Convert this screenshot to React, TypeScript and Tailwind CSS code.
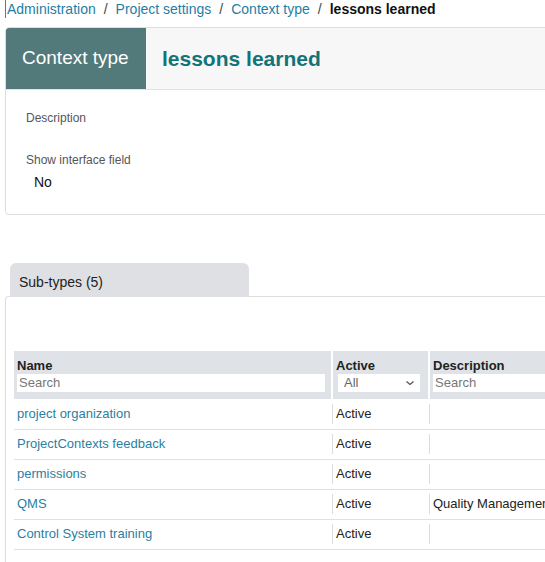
import React from "react";

type SubType = {
    name: string;
    status: string;
    description: string;
};

const subTypes: SubType[] = [
    { name: "project organization", status: "Active", description: "" },
    { name: "ProjectContexts feedback", status: "Active", description: "" },
    { name: "permissions", status: "Active", description: "" },
    { name: "QMS", status: "Active", description: "Quality Management System" },
    { name: "Control System training", status: "Active", description: "" },
];

const Breadcrumb = () => (
    <div className="flex h-[18px] items-center pl-[5px] text-[14px] leading-[18px]">
        <span className="border-l border-[#3b82c4] pl-px text-[#1f7ea3]">Administration</span>
        <span className="px-2 text-[#444]">/</span>
        <span className="text-[#1f7ea3]">Project settings</span>
        <span className="px-2 text-[#444]">/</span>
        <span className="text-[#1f7ea3]">Context type</span>
        <span className="px-2 text-[#444]">/</span>
        <span className="font-bold text-[#111]">lessons learned</span>
    </div>
);

const ContextCard = () => (
    <div className="ml-[5px] mt-[9px] w-[620px] rounded-[4px] border border-[#dddddd]">
        <div className="flex h-[62px] border-b border-[#e2e2e2] bg-[#f7f7f7]">
            <div className="flex w-[140px] items-center rounded-tl-[3px] bg-[#527a7a] pl-4 text-[19px] text-white">
                Context type
            </div>
            <div className="flex items-center pl-4 text-[21px] font-bold text-[#127379]">
                lessons learned
            </div>
        </div>
        <div className="pb-[24px] pl-5 pt-[21px]">
            <div className="text-[12px] leading-[14px] text-[#555]">Description</div>
            <div className="mt-[28px] text-[12px] leading-[14px] text-[#555]">Show interface field</div>
            <div className="mt-[7px] pl-2 text-[14px] leading-[16px] text-[#111]">No</div>
        </div>
    </div>
);

const Chevron = () => (
    <svg width="10" height="10" viewBox="0 0 10 10" className="text-[#555]">
        <path d="M1.5 3.5 L5 6.5 L8.5 3.5" fill="none" stroke="currentColor" strokeWidth="1.3" />
    </svg>
);

const SubTypesTable = () => (
    <table className="ml-2 mt-[54px] w-[640px] table-fixed border-collapse text-[13px]">
        <colgroup>
            <col className="w-[318px]" />
            <col className="w-[97px]" />
            <col />
        </colgroup>
        <thead>
            <tr className="h-[48px] bg-[#dfe2e6] align-top">
                <th className="border-r-2 border-white px-[3px] pt-[7px] text-left font-bold leading-[16px] text-[#222]">
                    Name
                    <div className="h-[18px] w-[308px] bg-white pl-[2px] text-[13px] font-normal leading-[18px] text-[#777]">
                        Search
                    </div>
                </th>
                <th className="border-r-2 border-white px-[3px] pt-[7px] text-left font-bold leading-[16px] text-[#222]">
                    Active
                    <div className="ml-[2px] flex h-[18px] w-[82px] items-center justify-between bg-white pl-[6px] pr-[5px] text-[13px] font-normal text-[#666]">
                        <span>All</span>
                        <Chevron />
                    </div>
                </th>
                <th className="px-[3px] pt-[7px] text-left font-bold leading-[16px] text-[#222]">
                    Description
                    <div className="h-[18px] w-full bg-white pl-[2px] text-[13px] font-normal leading-[18px] text-[#777]">
                        Search
                    </div>
                </th>
            </tr>
        </thead>
        <tbody>
            {subTypes.map((row) => (
                <tr key={row.name} className="h-[30px] border-b border-[#e0e0e0]">
                    <td className="px-[3px] text-[#2a7fa3]">{row.name}</td>
                    <td className="p-0">
                        <div className="flex h-[20px] items-center border-l border-[#dcdcdc] pl-[3px] text-[#222]">
                            {row.status}
                        </div>
                    </td>
                    <td className="p-0">
                        <div className="flex h-[20px] items-center overflow-hidden whitespace-nowrap border-l border-[#dcdcdc] pl-[3px] text-[#222]">
                            {row.description}
                        </div>
                    </td>
                </tr>
            ))}
        </tbody>
    </table>
);

const SubTypesTabs = () => (
    <div className="mt-[48px]">
        <div className="relative z-10 ml-[10px] h-[34px] w-[239px] rounded-t-[6px] bg-[#dee0e4] pl-[9px] pt-[11px] text-[14px] leading-[16px] text-[#222]">
            Sub-types (5)
        </div>
        <div className="-mt-px ml-[5px] h-[300px] w-[620px] rounded-tl-[4px] border-l border-t border-[#dddddd]">
            <SubTypesTable />
        </div>
    </div>
);

const App = () => {
    return (
        <div className="h-[562px] w-[545px] overflow-hidden bg-white font-['Liberation_Sans',Arial,sans-serif]">
            <Breadcrumb />
            <ContextCard />
            <SubTypesTabs />
        </div>
    );
};

export default App;
